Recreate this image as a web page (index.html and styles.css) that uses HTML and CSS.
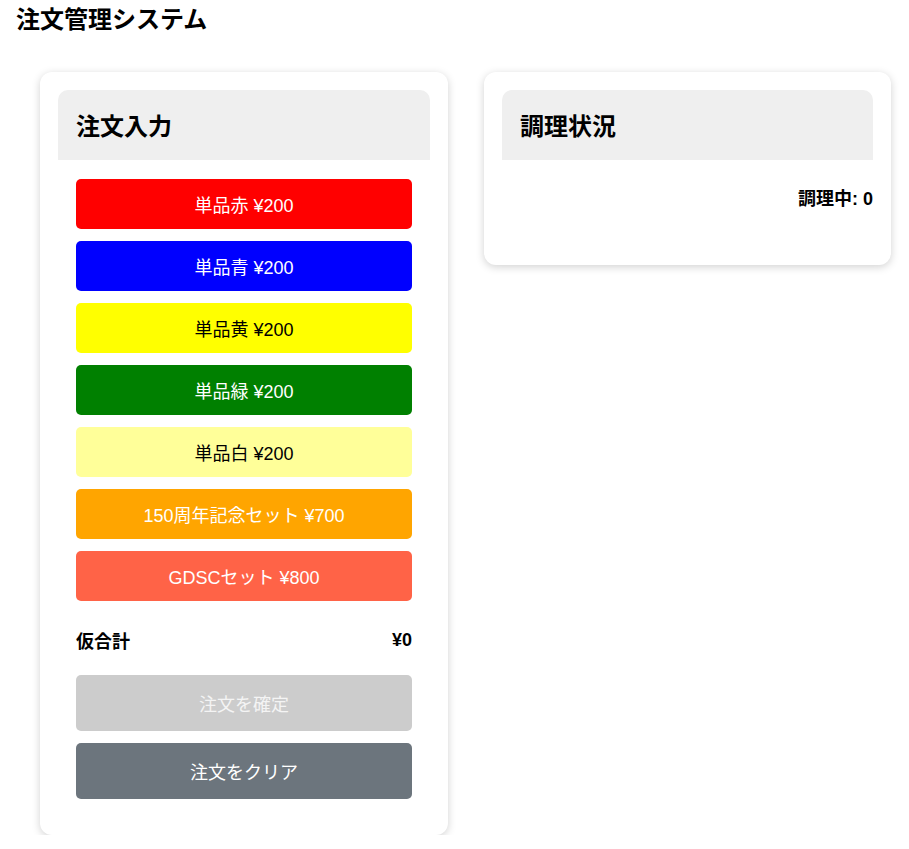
FILE: index.html
```html
<!DOCTYPE html>
<html lang="ja">
<head>
    <meta charset="UTF-8">
    <meta name="viewport" content="width=device-width, initial-scale=1.0">
    <title>注文管理システム</title>
    <link rel="stylesheet" href="styles.css">
</head>
<body>
    <h1 class="app-title">注文管理システム</h1>
    <div class="container">
        <div class="card">
            <div class="card-header">
                <h2>注文入力</h2>
            </div>
            <div class="order-body">
                <button class="item-btn red">単品赤 ¥200</button>
                <button class="item-btn blue">単品青 ¥200</button>
                <button class="item-btn yellow">単品黄 ¥200</button>
                <button class="item-btn green">単品緑 ¥200</button>
                <button class="item-btn white">単品白 ¥200</button>
                <button class="item-btn orange">150周年記念セット ¥700</button>
                <button class="item-btn tomato">GDSCセット ¥800</button>
                <div class="subtotal">
                    <span>仮合計</span>
                    <span id="subtotal">¥0</span>
                </div>
                <button class="action-btn confirm" disabled>注文を確定</button>
                <button class="action-btn clear">注文をクリア</button>
            </div>
        </div>
        <div class="card status-card">
            <div class="card-header">
                <h2>調理状況</h2>
            </div>
            <div class="status-body">
                <p class="cooking-count">調理中: <span id="cooking">0</span></p>
            </div>
        </div>
    </div>
</body>
</html>
```

FILE: styles.css
```css
body {
    margin: 0;
    font-family: "Liberation Sans", "Noto Sans CJK JP", sans-serif;
    color: #000;
    background: #fff;
}
.app-title {
    margin: 0;
    padding-left: 16px;
    font-size: 24px;
    line-height: 40px;
    font-weight: bold;
}
.container {
    display: grid;
    grid-template-columns: 408px 407px;
    gap: 36px;
    align-items: start;
    margin: 32px 0 0 40px;
}
.card {
    background: #fff;
    padding: 18px;
    border-radius: 12px;
    box-shadow: 0 2px 8px rgba(0,0,0,0.18);
}
.card-header {
    background-color: #efefef;
    border-radius: 10px 10px 0 0;
    padding: 4px 18px 0;
}
.card-header h2 {
    margin: 0;
    font-size: 24px;
    line-height: 66px;
}
.order-body {
    display: flex;
    flex-direction: column;
    gap: 12px;
    padding: 19px 18px 18px;
}
button {
    font-family: inherit;
    font-size: 18px;
    border: none;
    border-radius: 5px;
    width: 100%;
    cursor: pointer;
}
.item-btn {
    height: 50px;
    color: #fff;
}
.item-btn.red { background-color: #ff0000; }
.item-btn.blue { background-color: #0000ff; }
.item-btn.yellow { background-color: #ffff00; color: #000; }
.item-btn.green { background-color: #008000; }
.item-btn.white { background-color: #ffff99; color: #000; }
.item-btn.orange { background-color: #ffa500; }
.item-btn.tomato { background-color: #ff6347; }
.subtotal {
    display: flex;
    justify-content: space-between;
    align-items: center;
    box-sizing: border-box;
    height: 50px;
    padding-top: 4px;
    font-size: 18px;
    font-weight: bold;
}
.action-btn {
    height: 56px;
    color: #fff;
}
.action-btn.confirm {
    background-color: #cccccc;
    color: #f4f4f4;
    cursor: default;
}
.action-btn.clear {
    background-color: #6c757d;
}
.status-body {
    padding: 28px 0 37px;
}
.cooking-count {
    margin: 0;
    text-align: right;
    font-size: 18px;
    line-height: 22px;
    font-weight: bold;
}
```
